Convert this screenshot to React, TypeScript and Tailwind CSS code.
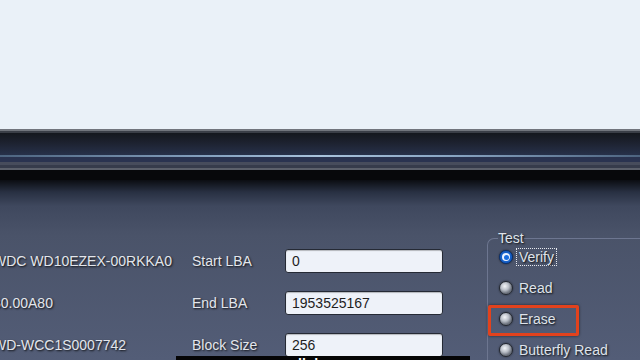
import React from "react";

const font = { fontFamily: '"Liberation Sans", Arial, sans-serif' };

function Radio({ checked }: { checked?: boolean }) {
  if (checked) {
    return (
      <div className="w-[14px] h-[14px] rounded-full bg-[#1560c8] border border-[#0b2f6a] flex items-center justify-center shrink-0 shadow-[0_0_2px_rgba(0,0,0,0.6)]">
        <div className="w-[8px] h-[8px] rounded-full bg-[#eaf2ff] flex items-center justify-center">
          <div className="w-[5px] h-[5px] rounded-full bg-[#1a6ee0]" />
        </div>
      </div>
    );
  }
  return (
    <div className="w-[14px] h-[14px] rounded-full border border-[#23272f] bg-[radial-gradient(circle_at_40%_35%,#f4f6f9_0px,#b9bec7_4px,#6d737e_7px)] shrink-0 shadow-[0_0_2px_rgba(0,0,0,0.6)]" />
  );
}

const shadow = "[text-shadow:1px_1px_2px_rgba(0,0,0,0.85)]";

function Row({ info, label, value }: { info: string; label: string; value: string }) {
  return (
    <div className="flex items-center h-[24px]">
      <div className={`w-[199px] text-[14px] text-[#e3e6ec] ${shadow} whitespace-nowrap`}>{info}</div>
      <div className={`w-[93px] text-[14px] text-[#e3e6ec] ${shadow} whitespace-nowrap`}>{label}</div>
      <div className="w-[158px] h-[24px] rounded-[3px] border border-[#252a35] bg-[#eef2f9] flex items-center pl-[6px] text-[14px] text-[#1e1e1e] shadow-[inset_0_1px_1px_rgba(0,0,0,0.25)]">
        {value}
      </div>
    </div>
  );
}

export default function App() {
  return (
    <div className="w-[640px] h-[360px] overflow-hidden relative" style={font}>
      <div className="h-[129px] bg-[#eaf1f8]" />
      {/* dark chrome band */}
      <div className="h-[2px] bg-[#71757d]" />
      <div className="h-[2px] bg-[#3a3e47]" />
      <div className="h-[22px] bg-[linear-gradient(180deg,#14171e_0%,#1d2230_45%,#27314a_100%)]" />
      <div className="h-[2px] bg-[linear-gradient(90deg,#4d6480_0%,#8aa6c4_35%,#a9c3dc_50%,#8aa6c4_70%,#4d6480_100%)]" />
      <div className="h-[5px] bg-[#2a3350]" />
      <div className="h-[3px] bg-[#474c5c]" />
      <div className="h-[3px] bg-[#363b4b]" />
      <div className="h-[2px] bg-[#5c606b]" />
      <div className="h-[10px] bg-[#07080b]" />
      {/* content */}
      <div className="h-[180px] bg-[linear-gradient(180deg,#0b0d12_0px,#283042_12px,#3f485e_26px,#4a5369_55px,#535d77_180px)] flex">
        <div className="flex flex-col gap-[18px] pt-[69px] ml-[-7px]">
          <Row info="WDC WD10EZEX-00RKKA0" label="Start LBA" value="0" />
          <Row info="80.00A80" label="End LBA" value="1953525167" />
          <Row info="WD-WCC1S0007742" label="Block Size" value="256" />
        </div>
        <fieldset className="ml-[44px] mt-[50px] flex-1 border-l border-t border-[#6d7690] rounded-tl-[7px] p-0 min-w-0">
          <legend className={`ml-[10px] px-0 text-[14px] leading-[16px] text-[#dfe3ea] ${shadow}`}>Test</legend>
          <div className="flex flex-col gap-[9px] pl-[11px]">
            <div className="flex items-center h-[22px] gap-[3px]">
              <Radio checked />
              <span className={`border border-dotted border-[#e6e9ef] px-[2px] h-[18px] flex items-center text-[14px] text-[#dfe3ea] ${shadow}`}>Verify</span>
            </div>
            <div className="flex items-center h-[22px] gap-[6px]">
              <Radio />
              <span className={`text-[14px] text-[#dfe3ea] ${shadow}`}>Read</span>
            </div>
            <div className="flex items-center h-[22px] gap-[6px]">
              <Radio />
              <span className={`text-[14px] text-[#dfe3ea] ${shadow}`}>Erase</span>
            </div>
            <div className="flex items-center h-[22px] gap-[6px]">
              <Radio />
              <span className={`text-[14px] text-[#dfe3ea] whitespace-nowrap ${shadow}`}>Butterfly Read</span>
            </div>
          </div>
        </fieldset>
      </div>
      {/* red annotation box */}
      <div className="absolute left-[488px] top-[305px] w-[91px] h-[31px] border-[3px] border-[#e2421d] rounded-[2px] shadow-[0_0_3px_rgba(0,0,0,0.6)]" />
      {/* subtitle bar at bottom */}
      <div className="absolute left-[176px] top-[356px] w-[294px] h-[4px] bg-[#050506] overflow-hidden">
        <div className="absolute left-[122px] top-[1px] text-[14px] leading-[14px] text-white font-bold">ll ·l</div>
      </div>
    </div>
  );
}
